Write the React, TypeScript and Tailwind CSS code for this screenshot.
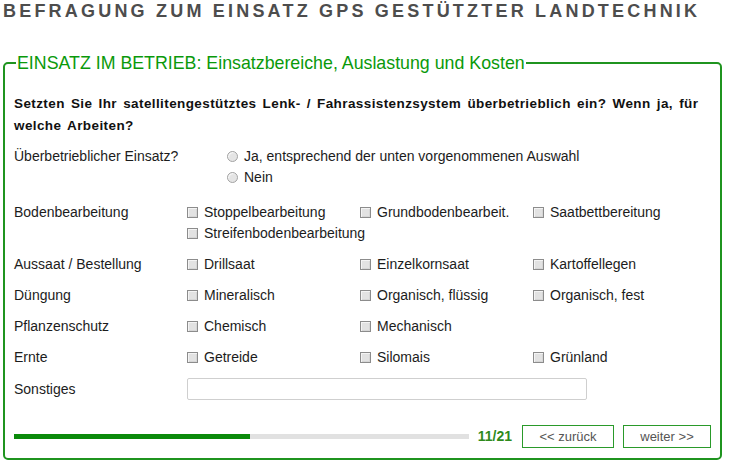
import React from "react";

const Box = () => (
  <span className="inline-block w-[11px] h-[11px] border border-[#8c8c8c] bg-[#e2e2e2] shadow-[inset_1px_1px_0_#f4f4f4,inset_-1px_-1px_0_#d6d6d6] shrink-0 mr-[6px]" />
);

const Radio = () => (
  <span className="inline-block w-[11px] h-[11px] rounded-full border border-[#a3a3a3] bg-[#e4e4e4] shadow-[inset_1px_1px_1px_#f8f8f8] shrink-0 mr-[6px]" />
);

const Opt = ({ label }: { label: string }) => (
  <div className="flex items-center w-[173px] h-[21px]">
    <Box />
    <span>{label}</span>
  </div>
);

const Row = ({
  label,
  opts,
  mt,
}: {
  label: string;
  opts: (string | null)[];
  mt: string;
}) => (
  <div className={`flex ${mt}`}>
    <div className="w-[173px] shrink-0 h-[21px]">{label}</div>
    <div className="flex flex-wrap w-[519px]">
      {opts.map((o, i) =>
        o ? <Opt key={i} label={o} /> : <div key={i} className="w-[173px] h-[21px]" />
      )}
    </div>
  </div>
);

export default function App() {
  return (
    <div className="w-[730px] h-[462px] bg-white font-['Liberation_Sans',Arial,sans-serif] overflow-hidden">
      <div className="pl-[3px] pt-0 text-[18px] leading-[22px] font-bold tracking-[3.2px] text-[#4d4d4d] whitespace-nowrap">
        BEFRAGUNG ZUM EINSATZ GPS GESTÜTZTER LANDTECHNIK
      </div>
      <fieldset className="ml-[3px] mt-[32px] w-[719px] border-2 border-[#1f941f] rounded-[5px] pl-[9px] pr-[9px] pb-[10px] pt-[20px]">
        <legend className="ml-[2px] px-[1px] text-[17.8px] leading-[18px] text-[#0a990a] whitespace-nowrap">
          EINSATZ IM BETRIEB: Einsatzbereiche, Auslastung und Kosten
        </legend>
        <div className="text-[14px] leading-[21px] text-[#1c1c1c] pt-[1px]">
          <div className="text-[13.5px] leading-[22px] font-bold tracking-[0.4px] [word-spacing:2px] text-[#111] whitespace-nowrap">
            Setzten Sie Ihr satellitengestütztes Lenk- / Fahrassistenzsystem überbetrieblich ein? Wenn ja, für
            <br />
            welche Arbeiten?
          </div>
          <div className="flex mt-[9px]">
            <div className="w-[213px] shrink-0">Überbetrieblicher Einsatz?</div>
            <div className="flex flex-col">
              <div className="flex items-center h-[21px]">
                <Radio />
                <span>Ja, entsprechend der unten vorgenommenen Auswahl</span>
              </div>
              <div className="flex items-center h-[21px]">
                <Radio />
                <span>Nein</span>
              </div>
            </div>
          </div>
          <Row
            mt="mt-[14px]"
            label="Bodenbearbeitung"
            opts={["Stoppelbearbeitung", "Grundbodenbearbeit.", "Saatbettbereitung", "Streifenbodenbearbeitung"]}
          />
          <Row mt="mt-[10px]" label="Aussaat / Bestellung" opts={["Drillsaat", "Einzelkornsaat", "Kartoffellegen"]} />
          <Row mt="mt-[10px]" label="Düngung" opts={["Mineralisch", "Organisch, flüssig", "Organisch, fest"]} />
          <Row mt="mt-[10px]" label="Pflanzenschutz" opts={["Chemisch", "Mechanisch", null]} />
          <Row mt="mt-[10px]" label="Ernte" opts={["Getreide", "Silomais", "Grünland"]} />
          <div className="flex items-center mt-[10px] h-[22px]">
            <div className="w-[173px] shrink-0">Sonstiges</div>
            <div className="w-[400px] h-[22px] border border-[#cfcfcf] rounded-[2px] bg-white" />
          </div>
          <div className="flex items-center mt-[25px] h-[23px]">
            <div className="flex-1 h-[5px] bg-[#e1e1e1] flex">
              <div className="w-[236px] h-full bg-[#0b8a0b]" />
            </div>
            <div className="ml-[9px] text-[14px] font-bold text-[#2f8a1c]">11/21</div>
            <div className="ml-[10px] w-[92px] h-[23px] border border-[#2a9a2a] flex items-center justify-center text-[13px] text-[#555]">
              &lt;&lt; zurück
            </div>
            <div className="ml-[9px] w-[88px] h-[23px] border border-[#2a9a2a] flex items-center justify-center text-[13px] text-[#555]">
              weiter &gt;&gt;
            </div>
          </div>
        </div>
      </fieldset>
    </div>
  );
}
